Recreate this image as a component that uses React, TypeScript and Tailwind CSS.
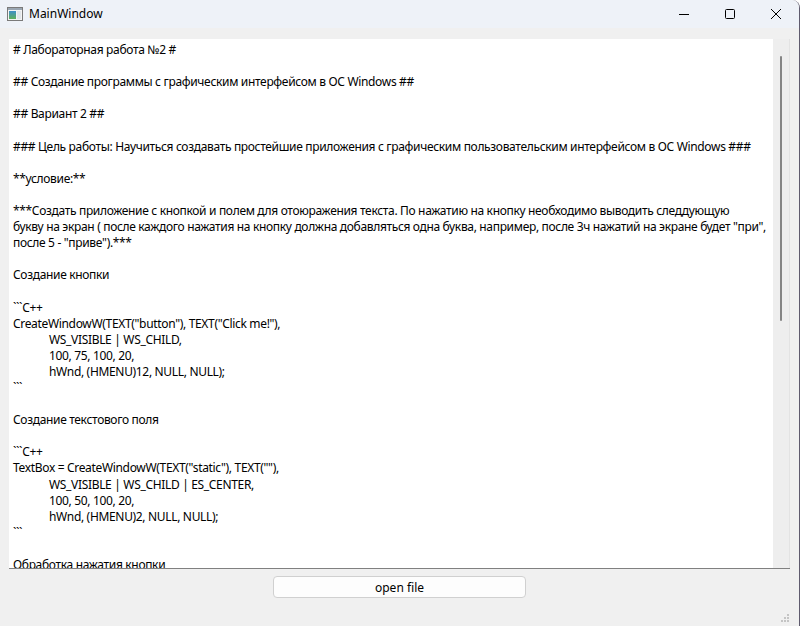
import React from 'react';

// строки содержимого текстового поля (как в окне, с теми же переносами)
const lines: { text: string; indent?: boolean }[] = [
  { text: '# Лабораторная работа №2 #' },
  { text: '' },
  { text: '## Создание программы с графическим интерфейсом в ОС Windows ##' },
  { text: '' },
  { text: '## Вариант 2 ##' },
  { text: '' },
  { text: '### Цель работы: Научиться создавать простейшие приложения с графическим пользовательским интерфейсом в ОС Windows ###' },
  { text: '' },
  { text: '**условие:**' },
  { text: '' },
  { text: '***Создать приложение с кнопкой и полем для отоюражения текста. По нажатию на кнопку необходимо выводить следдующую' },
  { text: 'букву на экран ( после каждого нажатия на кнопку должна добавляться одна буква, например, после 3ч нажатий на экране будет "при",' },
  { text: 'после 5 - "приве").***' },
  { text: '' },
  { text: 'Создание кнопки' },
  { text: '' },
  { text: '```C++' },
  { text: 'CreateWindowW(TEXT("button"), TEXT("Click me!"),' },
  { text: 'WS_VISIBLE | WS_CHILD,', indent: true },
  { text: '100, 75, 100, 20,', indent: true },
  { text: 'hWnd, (HMENU)12, NULL, NULL);', indent: true },
  { text: '```' },
  { text: '' },
  { text: 'Создание текстового поля' },
  { text: '' },
  { text: '```C++' },
  { text: 'TextBox = CreateWindowW(TEXT("static"), TEXT(""),' },
  { text: 'WS_VISIBLE | WS_CHILD | ES_CENTER,', indent: true },
  { text: '100, 50, 100, 20,', indent: true },
  { text: 'hWnd, (HMENU)2, NULL, NULL);', indent: true },
  { text: '```' },
  { text: '' },
  { text: 'Обработка нажатия кнопки' },
  { text: '' },
];

const AppIcon = () => (
  <svg width="16" height="16" viewBox="0 0 16 16">
    <defs>
      <linearGradient id="g" x1="0" y1="0" x2="0" y2="1">
        <stop offset="0" stopColor="#3f8fc9" />
        <stop offset="1" stopColor="#5fb05a" />
      </linearGradient>
    </defs>
    <rect x="0.5" y="1.5" width="15" height="13" fill="#f4f4f4" stroke="#7a7a7a" />
    <rect x="1" y="2" width="14" height="2" fill="#9aa6b2" />
    <rect x="2" y="5" width="7" height="8" fill="url(#g)" />
    <rect x="10" y="5" width="4" height="8" fill="#e2e6ea" />
  </svg>
);

export default function App() {
  return (
    <div className="w-[800px] h-[626px] flex flex-col bg-[#f0f0f0] overflow-hidden border-r border-[#5f5b6e] rounded-tr-[8px] font-['Segoe_UI','Noto_Sans',sans-serif] text-[12px] text-black">
      {/* Заголовок окна */}
      <div className="h-[28px] flex items-center bg-[#eef2f8] shrink-0">
        <div className="pl-[7px] pr-[6px] flex items-center">
          <AppIcon />
        </div>
        <span className="text-[12px] leading-none">MainWindow</span>
        <div className="ml-auto flex items-center h-full">
          <div className="w-[46px] h-full flex items-center justify-center">
            <svg width="10" height="10" viewBox="0 0 10 10">
              <path d="M0 5.5h10" stroke="#000" strokeWidth="1" />
            </svg>
          </div>
          <div className="w-[46px] h-full flex items-center justify-center">
            <svg width="10" height="10" viewBox="0 0 10 10">
              <rect x="0.5" y="0.5" width="9" height="9" rx="1" fill="none" stroke="#000" strokeWidth="1" />
            </svg>
          </div>
          <div className="w-[46px] h-full flex items-center justify-center">
            <svg width="10" height="10" viewBox="0 0 10 10">
              <path d="M0 0L10 10M10 0L0 10" stroke="#000" strokeWidth="1" />
            </svg>
          </div>
        </div>
      </div>

      {/* Содержимое окна */}
      <div className="flex-1 flex flex-col px-[9px] pt-[11px]">
        <div className="h-[530px] flex border-b border-[#808080] shrink-0">
          <div className="flex-1 bg-white overflow-hidden px-[4px] pt-[3px] leading-[16.1px] tracking-[-0.33px]">
            {lines.map((l, i) => (
              <div key={i} className={`h-[16.1px] whitespace-pre ${l.indent ? 'pl-[36px]' : ''}`}>
                {l.text}
              </div>
            ))}
          </div>
          <div className="w-[17px] bg-[#eeeeee] border-r border-[#e3e3e3] flex justify-center pt-[17px]">
            <div className="w-[2px] h-[265px] bg-[#858585] rounded-full" />
          </div>
        </div>

        <div className="flex justify-center pt-[7px]">
          <button className="w-[253px] h-[22px] bg-[#fdfdfd] border border-[#d0d0d0] rounded-[4px] text-[12px] leading-none pt-[1px]">
            open file
          </button>
        </div>

        <div className="mt-auto flex justify-end pb-[4px] pr-[1px]">
          <svg width="8" height="8" viewBox="0 0 8 8">
            <rect x="6" y="0" width="2" height="2" fill="#c4c4c4" />
            <rect x="3" y="3" width="2" height="2" fill="#c4c4c4" />
            <rect x="6" y="3" width="2" height="2" fill="#c4c4c4" />
            <rect x="0" y="6" width="2" height="2" fill="#c4c4c4" />
            <rect x="3" y="6" width="2" height="2" fill="#c4c4c4" />
            <rect x="6" y="6" width="2" height="2" fill="#c4c4c4" />
          </svg>
        </div>
      </div>
    </div>
  );
}
